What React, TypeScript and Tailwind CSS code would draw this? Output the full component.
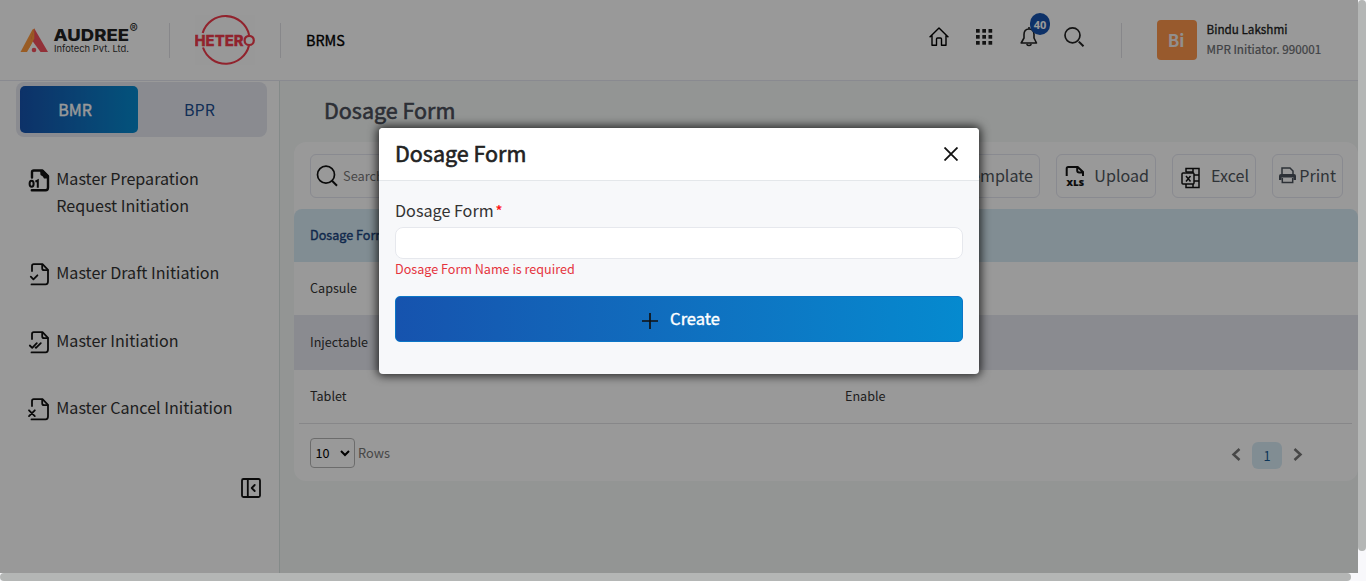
import type { ReactNode } from "react";

const fileOutline = "M5 9V4Q5 2.2 6.8 2.2H15.5L21 7.8V19.2Q21 22.4 18.6 22.4H4.5";

function FileIcon({ children }: { children: ReactNode }) {
  return (
    <svg viewBox="0 0 24 24" className="h-6 w-6" fill="none" stroke="#111" strokeWidth="1.8" strokeLinejoin="round" strokeLinecap="round">
      <path d={fileOutline} />
      <path d="M15.2 2.6V6.2Q15.2 8.2 17.2 8.2H20.6" />
      {children}
    </svg>
  );
}

const items = [
  {
    label: "Master Preparation Request Initiation",
    icon: (
      <svg viewBox="0 0 24 24" className="h-6 w-6">
        <path d="M5 9.5V4Q5 2.5 6.8 2.5H15.5L21 8V19.5Q21 22.3 18.6 22.3H4.8" fill="none" stroke="#111" strokeWidth="2.4" strokeLinecap="round" strokeLinejoin="round" />
        <path d="M13 2H16L21.5 7.5V10.5H17Q16.5 8 13.5 7Z" fill="#111" />
        <ellipse cx="4.6" cy="15.7" rx="2" ry="3" fill="none" stroke="#111" strokeWidth="2" />
        <path d="M8.4 13.6L10.8 12.4V19.7" fill="none" stroke="#111" strokeWidth="2" />
      </svg>
    ),
  },
  { label: "Master Draft Initiation", icon: <FileIcon><path d="M3.8 14.7L6.4 17.3L10.4 13.3" /></FileIcon> },
  { label: "Master Initiation", icon: <FileIcon><path d="M2.8 15.5L5.2 17.8L9.8 13.2M8.6 17.5L9 17.8L13.8 13.2" /></FileIcon> },
  { label: "Master Cancel Initiation", icon: <FileIcon><path d="M2 13.3L7.8 19.1M7.8 13.3L2 19.1" /></FileIcon> },
];

function AudreeLogo() {
  return (
    <svg width="123" height="38" viewBox="20 20 123 38" className="ml-5 mb-[3px]">
      <path d="M20.5 52L32.5 29.5L34.5 28.5V38L27 52Z" fill="#ff9a3d" />
      <path d="M34.3 28.5L48 52H40.5L31 39Z" fill="#f4515e" />
      <path d="M34.3 28.5V38.5L31 45L28 50Z" fill="#ff9a3d" />
      <circle cx="34" cy="50" r="2.3" fill="#f4515e" />
      <text x="53.5" y="41" fontSize="16.5" fontWeight="800" textLength="75.5" lengthAdjust="spacingAndGlyphs" fill="#222" fontFamily="Inter, sans-serif">AUDREE</text>
      <text x="54" y="52" fontSize="9.2" textLength="75" lengthAdjust="spacingAndGlyphs" fill="#333" fontFamily="Inter, sans-serif">Infotech Pvt. Ltd.</text>
      <text x="129.5" y="33" fontSize="12.5" fontWeight="600" fill="#333" fontFamily="Inter, sans-serif">®</text>
    </svg>
  );
}

function HeteroLogo() {
  return (
    <svg width="60" height="50" viewBox="195 15 60 50" className="ml-[25px] bg-[#fdfdfd]">
      <path d="M202.7 33A24 24 0 0 1 249.1 35M249 45.5A24 24 0 0 1 203 47.5" fill="none" stroke="#f23b4b" strokeWidth="2.1" />
      <circle cx="249.2" cy="40.4" r="4.6" fill="none" stroke="#f23b4b" strokeWidth="2.2" />
      <text x="194.5" y="45.5" fontSize="14.2" fontWeight="800" textLength="49" lengthAdjust="spacingAndGlyphs" fill="#f23b4b" stroke="#f23b4b" strokeWidth=".3" fontFamily="Inter, sans-serif">HETER</text>
    </svg>
  );
}

function Header() {
  return (
    <header className="flex h-[81px] shrink-0 items-center border-b border-[#e4e6f0] bg-white">
      <AudreeLogo />
      <div className="ml-[26px] h-[35px] w-px bg-[#e1e2e6]" />
      <HeteroLogo />
      <div className="ml-[25px] h-[35px] w-px bg-[#e1e2e6]" />
      <span className="ml-[25px] text-[14.4px] leading-5 text-black [-webkit-text-stroke:0.35px]">BRMS</span>
      <div className="ml-auto mt-[24px] flex h-[26px] items-center self-start text-[#222]">
        <svg width="20" height="20" viewBox="0 0 20 20" fill="none" stroke="#000" strokeWidth="1.4" strokeLinejoin="round">
          <path d="M.6 10.3L10 1L19.4 10.3M3 8.5V18.3H7.5V12Q7.5 11 8.5 11H11.5Q12.5 11 12.5 12V18.3H17V8.5" />
        </svg>
        <svg width="18" height="18" viewBox="0 0 18 18" className="ml-[26px]" fill="#222">
          {[1, 7, 13].map((y) => [1, 7.3, 13.5].map((x) => <rect key={`${x}-${y}`} x={x} y={y} width="3.7" height="3.7" />))}
        </svg>
        <div className="relative ml-[27px] h-[22px] w-[18px]">
          <svg width="18" height="22" viewBox="0 0 18 22" fill="none" stroke="#222" strokeWidth="1.6" strokeLinejoin="round">
            <path d="M9 1V3M9 3C5.5 3 4 5.5 4 8.5V12L1.2 17H16.5L14 12V8.5C14 5.5 12.5 3 9 3M6.5 18.2Q9 20.8 11.5 18.2" />
          </svg>
          <span className="absolute -top-[13px] left-[10px] flex h-[22px] w-5 items-center justify-center rounded-full bg-[#1653ae] pt-[3px] font-['Open_Sans'] text-[11px] font-bold text-white">40</span>
        </div>
        <svg width="22" height="22" viewBox="0 0 22 22" className="ml-[25px] mr-px" fill="none" stroke="#222" strokeWidth="1.7">
          <circle cx="9.5" cy="9.3" r="7.5" /><path d="M15.8 15.6L20.5 20.3" strokeWidth="2" />
        </svg>
      </div>
      <div className="ml-[35px] h-[35px] w-px bg-[#e1e2e6]" />
      <div className="ml-[35px] flex h-10 w-10 items-center justify-center rounded bg-[#fd964b] pr-[2px] text-[17px] font-bold text-[#f4efec]">Bi</div>
      <div className="ml-[9.5px] w-[151.5px] whitespace-nowrap pb-[2px] text-[11.7px] leading-5">
        <div className="text-[#222] [-webkit-text-stroke:0.3px]">Bindu Lakshmi</div>
        <div className="text-[#6a6c70] [-webkit-text-stroke:0.2px]">MPR Initiator. 990001</div>
      </div>
    </header>
  );
}

function Sidebar() {
  return (
    <aside className="flex w-[280px] shrink-0 flex-col border-r border-[#dde6e4] bg-white pt-px">
      <div className="ml-4 flex h-[55px] w-[251px] rounded-lg bg-[#e6e8f1] p-1 text-[16px] text-[#1d4f91]">
        <div className="flex w-[118px] items-center justify-center rounded-[5px] bg-linear-to-r from-[#1653ae] to-[#058acf] pb-[2px] pr-2 text-white [-webkit-text-stroke:0.4px]">BMR</div>
        <div className="flex flex-1 items-center justify-center pb-[2px] pr-[2px]">BPR</div>
      </div>
      <nav className="mt-[28px] flex flex-col gap-[40.4px]">
        {items.map((item) => (
          <div key={item.label} className="flex pl-[27px]">
            <span className="mt-[3px] h-6 w-[29.3px]">{item.icon}</span>
            <span className="w-[190px] text-[16.1px] leading-[27px] text-[#333]">{item.label}</span>
          </div>
        ))}
      </nav>
      <svg width="22" height="22" viewBox="0 0 22 22" className="ml-60 mt-[56px]" fill="none" stroke="#111" strokeWidth="1.8" strokeLinecap="round" strokeLinejoin="round">
        <rect x="2" y="2" width="18" height="18" rx="1.5" /><path d="M7.8 2V20M14.7 8L11.7 11L14.7 14" />
      </svg>
    </aside>
  );
}

function ToolButton({ icon, label, className }: { icon?: ReactNode; label: string; className: string }) {
  return (
    <div className={`flex h-11 shrink-0 items-center justify-end rounded-[6px] border border-[#e4e6f0] pr-[6px] text-[16.1px] text-[#4f555c] ${className}`}>
      {icon}<span className="pb-[2px]">{label}</span>
    </div>
  );
}

function Content() {
  return (
    <main className="flex flex-1 flex-col bg-[#f5f9f7] pl-[14px]">
      <h1 className="ml-[30px] h-[61px] pt-[13px] text-[21.5px] leading-8 text-[#4b4f5a] [-webkit-text-stroke:0.6px]">Dosage Form</h1>
      <section className="h-[339px] rounded-xl bg-white pt-3">
        <div className="flex pl-4 pr-[15px]">
          <div className="flex h-11 w-[250px] items-center rounded-[6px] border border-[#e4e6f0] pl-[5px] text-[12.8px] text-[#777]">
            <svg width="22" height="22" viewBox="0 0 22 22" className="mr-[5px]" fill="none" stroke="#111" strokeWidth="1.7"><circle cx="10" cy="9.7" r="8.5" /><path d="M16 15.7L21 20.7" strokeWidth="2" /></svg>
            Search
          </div>
          <div className="ml-auto flex gap-4">
            <ToolButton label="Template" className="w-[140px]" />
            <ToolButton className="w-[100px]" label="Upload" icon={
              <svg width="20" height="24" viewBox="0 0 20 24" className="mr-[9px] mt-px">
                <path d="M1.7 11V3.5Q1.7 2 3.2 2H12.7L18 7V11M12.2 2V5.5Q12.2 7.5 14.2 7.5H18" fill="none" stroke="#111" strokeWidth="2" />
                <text x="1.5" y="21" fontSize="9" fontWeight="800" textLength="17.5" fill="#111" stroke="#111" strokeWidth=".2" fontFamily="Open Sans, sans-serif">XLS</text>
              </svg>} />
            <ToolButton className="w-[84px]" label="Excel" icon={
              <svg width="20" height="22" viewBox="0 0 20 22" className="mr-[10px] mt-[3px]" fill="none" stroke="#111" strokeWidth="1.5">
                <path d="M5 5V1.5H18V20.5H5V17M12 2V21M12 8H18M12 14H18M5 5H12" /><rect x="1" y="6" width="12" height="11" rx="1" fill="#fff" /><path d="M5 9L9.5 14.5M9.5 9L5 14.5" />
              </svg>} />
            <ToolButton className="w-[71px]" label="Print" icon={
              <svg width="17" height="17" viewBox="0 0 17 17" className="mr-[3px] mt-[-1px]">
                <path d="M3 7V1H11L14 4V7" fill="none" stroke="#4b535c" strokeWidth="1.5" /><path d="M0 9Q0 7 2 7H15Q17 7 17 9V13H14.5V10.5H2.5V13H0Z" fill="#4b535c" /><path d="M3.3 11V15.5H13.7V11" fill="none" stroke="#4b535c" strokeWidth="1.5" />
              </svg>} />
          </div>
        </div>
        <div className="mt-[11px] text-[12.6px] text-[#333]">
          <div className="flex h-[53px] items-center rounded-t-lg bg-[#d8ecf6] pb-px pl-4 text-[#1b457f] [-webkit-text-stroke:0.4px]">Dosage Form</div>
          <div className="flex h-[53px] items-center pl-4">Capsule</div>
          <div className="flex h-[55px] items-center bg-[#e6e8f1] pb-px pl-4">Injectable</div>
          <div className="ml-[5px] mr-[6px] flex h-[54px] items-center border-b border-[#e1e2e4] pb-px pl-[11px]"><span className="w-[535px]">Tablet</span>Enable</div>
        </div>
        <div className="flex items-start pl-4 pr-[53px] pt-[14px] text-[12.8px] text-[#777]">
          <div className="flex h-[30px] w-[45px] items-center rounded border border-[#b5b5b5] pl-[4.5px] text-[12.6px] text-black">10
            <svg width="10" height="8" viewBox="0 0 10 8" className="ml-[10.5px]" fill="none" stroke="#000" strokeWidth="2"><path d="M1 2L5 6L9 2" /></svg>
          </div>
          <span className="ml-[3px] leading-[30px]">Rows</span>
          <div className="ml-auto mt-[4px] flex h-[27px] items-center">
            <svg width="10" height="14" viewBox="0 0 10 14" className="mb-px" fill="none" stroke="#777" strokeWidth="2.5"><path d="M8.5 1L2.5 6.5L8.5 12" /></svg>
            <span className="mx-[11px] flex h-[27px] w-[30px] items-center justify-center rounded-[6px] bg-[#d8ecf6] text-[#155a94]">1</span>
            <svg width="12" height="14" viewBox="0 0 12 14" className="mb-px" fill="none" stroke="#777" strokeWidth="2.5"><path d="M1.5 1L7.5 6.5L1.5 12" /></svg>
          </div>
        </div>
      </section>
    </main>
  );
}

function Dialog() {
  return (
    <div className="absolute left-[379px] top-[128px] h-[246px] w-[600px] overflow-hidden rounded bg-[#f7f8fa] shadow-[0_0_10px_2px_rgba(0,0,0,0.75)]">
      <div className="flex h-[53px] items-center justify-between border-b border-[#e4e7ea] bg-white pl-4 pr-[21px]">
        <h2 className="pb-[2px] text-[21.5px] leading-8 text-[#222] [-webkit-text-stroke:0.6px]">Dosage Form</h2>
        <svg width="14" height="14" viewBox="0 0 14 14" stroke="#111" strokeWidth="1.8"><path d="M.5.5L13.5 13.5M13.5.5L.5 13.5" /></svg>
      </div>
      <div className="flex flex-col px-4 pt-[17px]">
        <label className="h-6 text-[16.15px] leading-6 text-[#333]">Dosage Form<span className="ml-[2px] text-[15px] text-[#f11] [-webkit-text-stroke:0.2px]">*</span></label>
        <div className="mt-[5px] h-8 rounded-lg border border-[#e6e8ed] bg-white" />
        <p className="text-[12.6px] leading-5 text-[#e5343d]">Dosage Form Name is required</p>
        <div className="mt-[17px] flex h-[46px] items-center justify-center rounded-[5px] border border-[#0b76c7] bg-linear-to-r from-[#1653ae] to-[#058acf] pl-1 text-[16.5px] text-white [-webkit-text-stroke:0.4px]">
          <svg width="16" height="16" viewBox="0 0 16 16" className="mr-3 mt-[3px]" stroke="#111" strokeWidth="1.7"><path d="M8 0V16M0 8H16" /></svg>
          <span className="pb-[2px]">Create</span>
        </div>
      </div>
    </div>
  );
}

export default function App() {
  return (
    <div className="grid h-[581px] w-[1366px] grid-cols-[1358px_8px] grid-rows-[573px_8px] overflow-hidden bg-[#f8f8fb] font-['Noto_Sans_CJK_SC','Noto_Sans',sans-serif]">
      <div className="relative flex flex-col overflow-hidden">
        <Header />
        <div className="flex min-h-0 flex-1"><Sidebar /><Content /></div>
        <div className="absolute inset-0 bg-black/40" />
        <Dialog />
      </div>
      <div className="h-[551px] rounded-full bg-[#b4b6b5]" />
      <div className="w-[1351px] rounded-full bg-[#b4b6b5]" />
    </div>
  );
}
